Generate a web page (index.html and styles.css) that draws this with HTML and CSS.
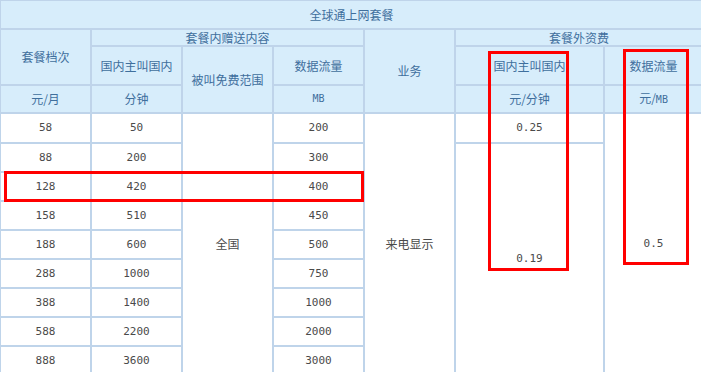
FILE: index.html
```html
<!DOCTYPE html>
<html lang="zh-CN">
<head>
<meta charset="utf-8">
<title>全球通上网套餐</title>
<link rel="stylesheet" href="styles.css">
</head>
<body>
<div class="wrap">
<table class="plan">
  <colgroup>
    <col class="c91"><col class="c91"><col class="c91"><col class="c91"><col class="c91"><col class="c149"><col class="c99">
  </colgroup>
  <thead>
    <tr class="h0"><th colspan="7">全球通上网套餐</th></tr>
    <tr class="h1">
      <th rowspan="2">套餐档次</th>
      <th colspan="3">套餐内赠送内容</th>
      <th rowspan="3">业务</th>
      <th colspan="2">套餐外资费</th>
    </tr>
    <tr class="h2">
      <th>国内主叫国内</th>
      <th rowspan="2">被叫免费范围</th>
      <th>数据流量</th>
      <th>国内主叫国内</th>
      <th>数据流量</th>
    </tr>
    <tr class="h3">
      <th>元/月</th>
      <th>分钟</th>
      <th class="mono">MB</th>
      <th>元/分钟</th>
      <th>元/<span class="mono">MB</span></th>
    </tr>
  </thead>
  <tbody class="data">
    <tr class="r first"><td>58</td><td>50</td><td rowspan="9" class="cn">全国</td><td>200</td><td rowspan="9" class="cn">来电显示</td><td>0.25</td><td rowspan="9">0.5</td></tr>
    <tr class="r"><td>88</td><td>200</td><td>300</td><td rowspan="8">0.19</td></tr>
    <tr class="r"><td>128</td><td>420</td><td>400</td></tr>
    <tr class="r"><td>158</td><td>510</td><td>450</td></tr>
    <tr class="r"><td>188</td><td>600</td><td>500</td></tr>
    <tr class="r"><td>288</td><td>1000</td><td>750</td></tr>
    <tr class="r"><td>388</td><td>1400</td><td>1000</td></tr>
    <tr class="r"><td>588</td><td>2200</td><td>2000</td></tr>
    <tr class="r"><td>888</td><td>3600</td><td>3000</td></tr>
  </tbody>
</table>
<div class="mark mark-row"></div>
<div class="mark mark-call"></div>
<div class="mark mark-data"></div>
</div>
</body>
</html>
```

FILE: styles.css
```css
html, body {
  margin: 0;
  padding: 0;
  background: #fff;
  overflow: hidden;
}
.wrap {
  position: relative;
  width: 703px;
}
.plan {
  border-collapse: separate;
  border-spacing: 0;
  table-layout: fixed;
  width: 703px;
  font-family: "Noto Sans CJK SC", sans-serif;
  font-size: 12px;
}
.c91 { width: 91px; }
.c149 { width: 149px; }
.c99 { width: 99px; }
.plan th, .plan td {
  border: 1px solid #bfd4ea;
  padding: 0;
  text-align: center;
  vertical-align: middle;
  box-sizing: border-box;
  line-height: 14px;
}
.plan th {
  background: #d7edfb;
  color: #3f6f9d;
  font-weight: normal;
}
.h0 th { height: 29px; }
.h1 th { height: 17px; }
.h2 th { height: 39px; }
.h3 th { height: 28px; }
.mono {
  font-family: "DejaVu Sans Mono", monospace;
  font-size: 10px;
}
.plan td {
  background: #fff;
  color: #4a4a4a;
  font-family: "DejaVu Sans Mono", "Noto Sans CJK SC", monospace;
  font-size: 11px;
  height: 29px;
}
.plan .first td { height: 30px; }
.plan td.cn {
  font-family: "Noto Sans CJK SC", sans-serif;
  font-size: 12px;
}
.mark {
  position: absolute;
  border: 3px solid #ff0000;
  box-sizing: border-box;
}
.mark-row { left: 4px; top: 171px; width: 360px; height: 31px; }
.mark-call { left: 488px; top: 51px; width: 81px; height: 220px; }
.mark-data { left: 623px; top: 49px; width: 66px; height: 216px; }
```
